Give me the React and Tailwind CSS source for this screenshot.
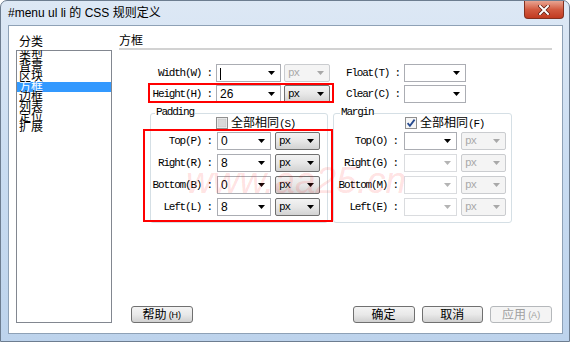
import React from 'react'

const MONO = "font-['Liberation_Mono',monospace] text-[11px] leading-[12px] tracking-[-1.2px] text-black"
const CJK = "font-['Liberation_Sans','Noto_Sans_CJK_SC',sans-serif]"

function Arrow({ color = '#000' }) {
  return (
    <svg width="7" height="4" viewBox="0 0 7 4" className="shrink-0">
      <path d="M0 0h7L3.5 4z" fill={color} />
    </svg>
  )
}

function Combo({ cls, value, dim, caret }) {
  return (
    <div className={`flex h-[18px] items-center justify-between bg-white pl-[3px] pr-[5px] border ${dim ? 'border-[#dadcdf]' : 'border-[#abadb3]'} ${cls}`}>
      <span className={`${CJK} text-[12px] leading-[14px] text-black`}>
        {caret ? <span className="inline-block h-[12px] w-px bg-black align-middle" /> : value}
      </span>
      <Arrow color={dim ? '#b4b4b4' : '#000'} />
    </div>
  )
}

function Unit({ cls, off }) {
  return off ? (
    <div className={`flex h-[18px] items-center justify-between rounded-[2px] border border-[#cacccf] bg-[#f4f4f4] pl-[3px] pr-[5px] ${cls}`}>
      <span className="font-['Liberation_Mono',monospace] text-[11px] leading-[12px] tracking-[-1.2px] text-[#a8a8a8]">px</span>
      <Arrow color="#a8a8a8" />
    </div>
  ) : (
    <div className={`flex h-[18px] items-center justify-between rounded-[2px] border border-[#707070] bg-linear-to-b from-[#f3f3f3] via-[#e7e7e7] to-[#d2d2d2] pl-[3px] pr-[5px] ${cls}`}>
      <span className={MONO}>px</span>
      <Arrow />
    </div>
  )
}

function Check({ on }) {
  return (
    <svg width="12" height="12" viewBox="0 0 12 12" className="shrink-0">
      <rect x="0.5" y="0.5" width="11" height="11" fill="#f6f6f6" stroke="#8f8f8f" />
      {on ? (
        <path d="M2.6 6.2 L4.9 8.8 L9.6 2.6" stroke="#264a8f" strokeWidth="1.8" fill="none" />
      ) : (
        <rect x="2" y="2" width="8" height="8" fill="#d9d9d9" stroke="#c4c4c4" strokeWidth="0.6" />
      )}
    </svg>
  )
}

function Btn({ children, off, cls }) {
  return (
    <div
      className={`flex h-[17px] w-[62px] items-center justify-center rounded-[3px] border text-[12px] leading-[14px] ${CJK} ${cls} ${
        off
          ? 'border-[#b5b8bb] bg-[#f4f4f4] text-[#a0a0a0]'
          : 'border-[#707070] bg-linear-to-b from-[#f3f3f3] via-[#e9e9e9] to-[#d0d0d0] text-black'
      }`}
    >
      {children}
    </div>
  )
}

const categories = ['类型', '背景', '区块', '方框', '边框', '列表', '定位', '扩展']

const padRows = [
  ['Top(P) :', '0'],
  ['Right(R) :', '8'],
  ['Bottom(B) :', '0'],
  ['Left(L) :', '8'],
]

const marRows = ['Top(O) :', 'Right(G) :', 'Bottom(M) :', 'Left(E) :']

export default function App() {
  return (
    <div className="relative h-[344px] w-[570px] overflow-hidden bg-white">
      <div className="flex h-[342px] w-[570px] flex-col rounded-t-[7px] border border-[#6d7d90] bg-linear-to-b from-[#dde8f5] via-[#c9dcf1] to-[#bdd3ec]">
        {/* title bar */}
        <div className="flex h-[24px] shrink-0 items-start">
          <div className={`pl-[7px] pt-[5px] text-[12px] leading-[14px] text-black ${CJK}`}>#menu ul li 的 CSS 规则定义</div>
          <div className="ml-auto mr-[5px] flex h-[18px] w-[40px] items-center justify-center rounded-b-[4px] border border-t-0 border-[#83301f] bg-linear-to-b from-[#e8a492] via-[#d25a40] to-[#c13a20]">
            <svg width="12" height="10" viewBox="0 0 12 10">
              <path d="M2 1 L10 9 M10 1 L2 9" stroke="#5a1a10" strokeWidth="3.4" strokeLinecap="square" />
              <path d="M2 1 L10 9 M10 1 L2 9" stroke="#fff" strokeWidth="2" strokeLinecap="square" />
            </svg>
          </div>
        </div>

        {/* client area */}
        <div className="ml-[7px] flex h-[309px] w-[555px] shrink-0 border border-[#8ea1b6] bg-white">
          {/* category list */}
          <div className="ml-[7px] w-[96px] pt-[9px]">
            <div className={`h-[15px] pl-[3px] text-[12px] leading-[14px] ${CJK}`}>分类</div>
            <div className="h-[273px] border border-[#828790] pt-px">
              {categories.map((c) => (
                <div
                  key={c}
                  className={`h-[10px] pl-[2px] text-[12px] leading-[10px] ${CJK} ${c === '方框' ? 'bg-[#3399ff] text-white' : 'text-black'}`}
                >
                  {c}
                </div>
              ))}
            </div>
          </div>

          {/* box panel */}
          <div className="ml-[7px] flex w-[433px] flex-col pt-[9px]">
            <div className={`h-[13px] text-[12px] leading-[13px] ${CJK}`}>方框</div>
            <div className="h-[2px] bg-[#d2d2d2]" />

            <div className="mt-[14px] flex h-[18px] items-center">
              <div className={`w-[93px] text-right whitespace-pre ${MONO}`}>Width(W) :</div>
              <Combo cls="ml-[4px] w-[65px]" caret />
              <Unit cls="ml-[3px] w-[46px]" off />
              <div className={`w-[70px] text-right whitespace-pre ${MONO}`}>Float(T) :</div>
              <Combo cls="ml-[4px] w-[62px]" />
            </div>
            <div className="mt-[3px] flex h-[18px] items-center">
              <div className={`w-[93px] text-right whitespace-pre ${MONO}`}>Height(H) :</div>
              <Combo cls="ml-[4px] w-[65px]" value="26" />
              <Unit cls="ml-[3px] w-[46px]" />
              <div className={`w-[70px] text-right whitespace-pre ${MONO}`}>Clear(C) :</div>
              <Combo cls="ml-[4px] w-[62px]" />
            </div>

            <div className="mt-[10px] flex">
              {/* padding */}
              <div className="relative ml-[31px] h-[110px] w-[178px] rounded-[3px] border border-[#d5dfe5]">
                <span className={`absolute -top-[8px] left-[4px] bg-white px-px ${MONO}`}>Padding</span>
                <div className="ml-[65px] mt-[2px] flex h-[14px] items-center">
                  <Check />
                  <span className={`ml-[3px] text-[12px] leading-[14px] ${CJK}`}>
                    全部相同<span className="font-['Liberation_Mono',monospace] text-[11px] tracking-[-1.2px]">(S)</span>
                  </span>
                </div>
                <div className="mt-[2px] flex flex-col gap-[4px]">
                  {padRows.map(([l, v]) => (
                    <div key={l} className="flex h-[18px] items-center">
                      <div className={`w-[61px] text-right whitespace-pre ${MONO}`}>{l}</div>
                      <Combo cls="ml-[5px] w-[54px]" value={v} />
                      <Unit cls="ml-[4px] w-[45px]" />
                    </div>
                  ))}
                </div>
              </div>

              {/* margin */}
              <div className="relative ml-[5px] h-[110px] w-[179px] rounded-[3px] border border-[#d5dfe5]">
                <span className={`absolute -top-[8px] left-[6px] bg-white px-px ${MONO}`}>Margin</span>
                <div className="ml-[71px] mt-[2px] flex h-[14px] items-center">
                  <Check on />
                  <span className={`ml-[3px] text-[12px] leading-[14px] ${CJK}`}>
                    全部相同<span className="font-['Liberation_Mono',monospace] text-[11px] tracking-[-1.2px]">(F)</span>
                  </span>
                </div>
                <div className="mt-[2px] flex flex-col gap-[4px]">
                  {marRows.map((l, i) => (
                    <div key={l} className="flex h-[18px] items-center">
                      <div className={`w-[64px] text-right whitespace-pre ${MONO}`}>{l}</div>
                      <Combo cls="ml-[6px] w-[53px]" dim={i > 0} />
                      <Unit cls="ml-[4px] w-[45px]" off />
                    </div>
                  ))}
                </div>
              </div>
            </div>

            <div className="mt-[83px] flex">
              <Btn cls="ml-[12px]">
                帮助<span className="ml-[2px] text-[9px]">(H)</span>
              </Btn>
              <Btn cls="ml-[160px]">确定</Btn>
              <Btn cls="ml-[7px]">取消</Btn>
              <Btn cls="ml-[7px]" off>
                应用<span className="ml-[2px] text-[9px]">(A)</span>
              </Btn>
            </div>
          </div>
        </div>
      </div>

      {/* watermark + annotation boxes drawn over the dialog */}
      <div className="pointer-events-none absolute left-[186px] top-[162px] font-['Liberation_Sans',sans-serif] text-[37px] italic leading-none text-[#ff2a2a]/15">
        www.aa25.cn
      </div>
      <div className="pointer-events-none absolute left-[148px] top-[83px] h-[20px] w-[186px] border-2 border-[#ff0000]" />
      <div className="pointer-events-none absolute left-[143px] top-[129px] h-[93px] w-[190px] border-2 border-[#ff0000]" />
    </div>
  )
}
